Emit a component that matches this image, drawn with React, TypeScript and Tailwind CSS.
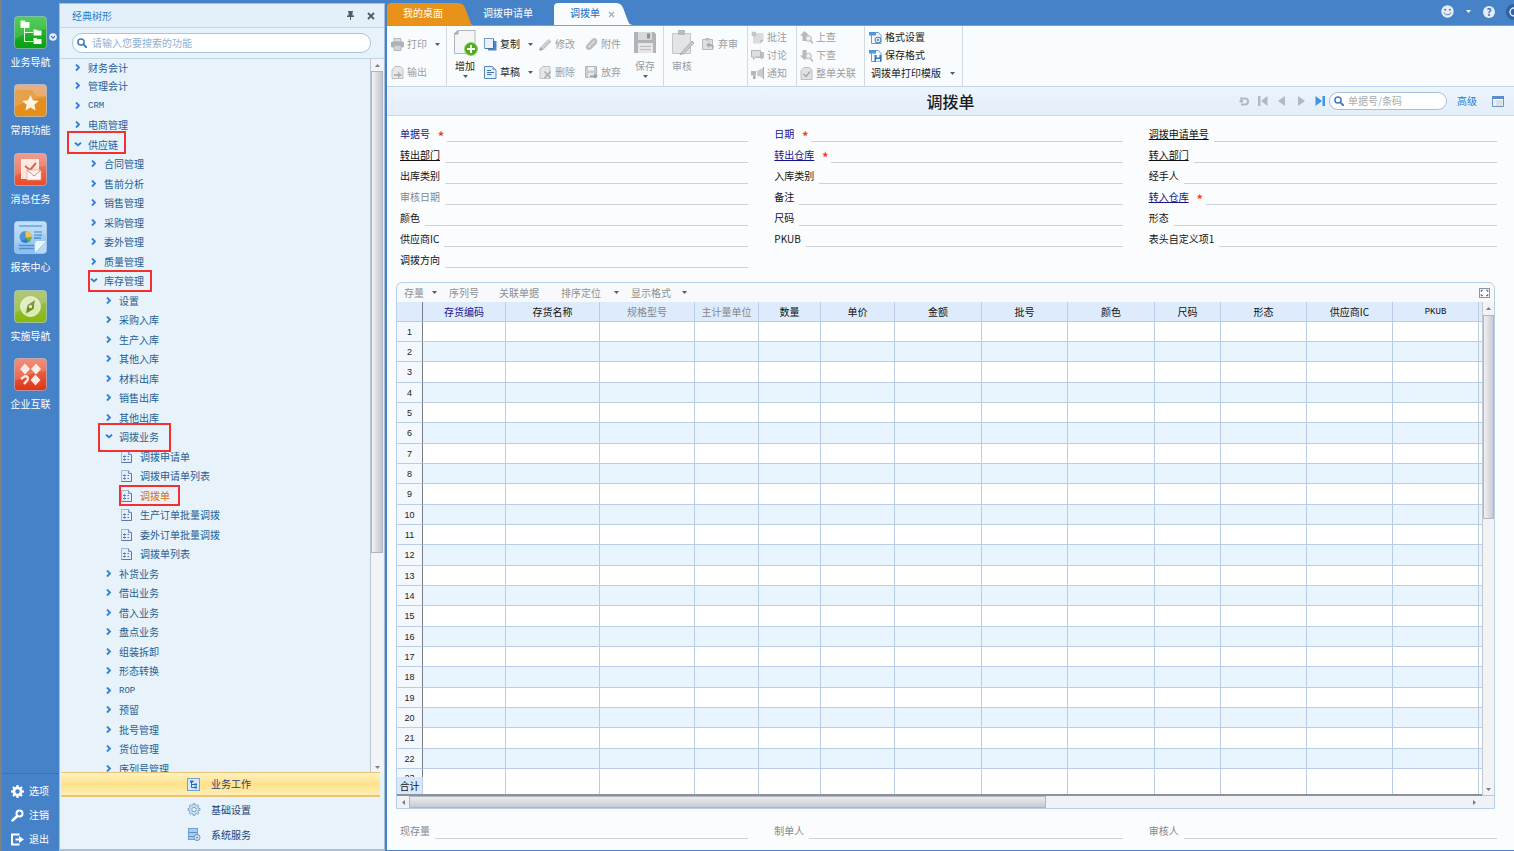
import type { ReactNode } from "react";
import clsx from "clsx";

/* ---------- small shared bits ---------- */

function Caret({ className = "text-[#555d66]" }: { className?: string }) {
  return (
    <svg width="5" height="3" viewBox="0 0 5 3" className={clsx("shrink-0", className)}>
      <path d="M0 0h5L2.5 3z" fill="currentColor" />
    </svg>
  );
}

function SearchIcon() {
  return (
    <svg width="10" height="10" viewBox="0 0 10 10" className="shrink-0">
      <circle cx="4" cy="4" r="3.1" fill="none" stroke="#3f7cc6" strokeWidth="1.5" />
      <path d="M6.4 6.4 9.2 9.2" stroke="#3f7cc6" strokeWidth="2" strokeLinecap="round" />
    </svg>
  );
}

/* ---------- left navigation ---------- */

function Tile({ id, top, bottom, children }: { id: string; top: string; bottom: string; children: ReactNode }) {
  return (
    <svg width="33" height="33" viewBox="0 0 33 33">
      <defs>
        <linearGradient id={id} x1="0" y1="0" x2="0" y2="1">
          <stop offset="0" stopColor={top} />
          <stop offset="1" stopColor={bottom} />
        </linearGradient>
      </defs>
      <rect x="0.5" y="0.5" width="32" height="32" rx="3" fill={`url(#${id})`} stroke="#ffffff" strokeOpacity="0.35" />
      {children}
      <path d="M1 4a3 3 0 0 1 3-3h25a3 3 0 0 1 3 3v9C22 14 12 17 1 23z" fill="#fff" fillOpacity="0.16" />
    </svg>
  );
}

const navItems = [
  {
    label: "业务导航",
    icon: (
      <Tile id="nav-green" top="#35c43a" bottom="#0a9e12">
        <path d="M10.500 12v13.500H19M10.500 16.500H19" fill="none" stroke="#e4fae2" strokeWidth="1" />
        <path d="M6.500 4.500h4l1 1.500h4v6h-9zM19.500 13.500h3l1 1h4v5h-8zM19.500 22h3l1 1h4v5h-8z" fill="#f5fff3" />
      </Tile>
    ),
  },
  {
    label: "常用功能",
    icon: (
      <Tile id="nav-orange" top="#e2a070" bottom="#f59a06">
        <path d="M1 8c0-1 1-2 2-2h15l4 6h10v17a3 3 0 0 1-3 3H4a3 3 0 0 1-3-3z" fill="#e08a1c" fillOpacity="0.75" />
        <path d="m16.500 11 2.400 5.300 5.800.6-4.300 3.900 1.200 5.700-5.100-2.900-5.100 2.900 1.200-5.700-4.300-3.900 5.800-.6z" fill="#fdf3e4" />
      </Tile>
    ),
  },
  {
    label: "消息任务",
    icon: (
      <Tile id="nav-red" top="#ee8a7c" bottom="#ea4a26">
        <path d="M7 6h18v20H7z" fill="#fbe5df" />
        <path d="m11 13 5 4 6-7" fill="none" stroke="#dd4430" strokeWidth="2" />
        <path d="M13 17h14v10H13z" fill="#fff6f2" stroke="#e2a496" strokeWidth="0.700" />
        <path d="m13 17 7 6 7-6" fill="none" stroke="#c98b7e" strokeWidth="1" />
      </Tile>
    ),
  },
  {
    label: "报表中心",
    icon: (
      <Tile id="nav-blue" top="#b5dcf8" bottom="#8cbdf0">
        <path d="M5 5h23M20 11h8M20 14h8M20 17h7M5 24.500h15M5 27.500h15" stroke="#4e8fd2" strokeWidth="1.500" />
        <circle cx="11.500" cy="16" r="6" fill="#2d7fce" />
        <path d="M11.500 16v-6a6 6 0 0 1 6 6z" fill="#f5b431" />
        <path d="M11.500 16h6a6 6 0 0 1-3 5.200z" fill="#63b54a" />
        <path d="M32 20 21 32v-9.500c0-1.500 1-2.500 2.500-2.500z" fill="#e8f5ff" />
        <path d="M32 21v8a3 3 0 0 1-3 3h-7z" fill="#b7dafa" />
      </Tile>
    ),
  },
  {
    label: "实施导航",
    icon: (
      <Tile id="nav-lime" top="#a3bd5e" bottom="#86b90c">
        <circle cx="16.500" cy="16.500" r="10" fill="#dcebb4" />
        <circle cx="16.500" cy="16.500" r="10" fill="none" stroke="#fff" strokeOpacity="0.6" />
        <path d="m21 10-1.500 9-7.500 4.500L13.500 15z" fill="#6b8a28" />
        <circle cx="16.500" cy="16.700" r="1.600" fill="#e6f1c9" />
      </Tile>
    ),
  },
  {
    label: "企业互联",
    icon: (
      <Tile id="nav-link" top="#f07a5e" bottom="#de3517">
        <path d="m11 5.500 5 5.500-5 5.500L6 11zM22 5.500l5 5.500-5 5.500-5-5.500zM21.500 16.500l5 5.500-5 5.500-5-5.500z" fill="#fde7e0" />
        <path d="m7 21 3.500-2.500c2.500-1 4.500 1.500 3 3.500L10 26" fill="none" stroke="#fde7e0" strokeWidth="2.500" />
      </Tile>
    ),
  },
];

const gearPath =
  "M5.600 0h1.800l.4 1.700 1.100.5L10.400 1.300l1.300 1.300-.9 1.500.5 1.100 1.700.4v1.800l-1.700.4-.5 1.100.9 1.500-1.300 1.300-1.500-.9-1.100.5-.4 1.700H5.600l-.4-1.700-1.100-.5-1.500.9-1.300-1.300.9-1.500-.5-1.100L0 7.400V5.600l1.700-.4.500-1.100-.9-1.500 1.300-1.300 1.500.9 1.100-.5z";

const systemItems = [
  {
    label: "选项",
    icon: <path d={gearPath + "M6.500 4.300a2.200 2.200 0 1 0 0 4.400 2.200 2.200 0 0 0 0-4.400z"} fillRule="evenodd" fill="currentColor" />,
  },
  {
    label: "注销",
    icon: (
      <>
        <circle cx="8.500" cy="4.500" r="3" fill="none" stroke="currentColor" strokeWidth="2" />
        <path d="M6.200 7 1.500 11.500" stroke="currentColor" strokeWidth="2.500" strokeLinecap="round" />
      </>
    ),
  },
  {
    label: "退出",
    icon: (
      <>
        <path d="M7.500 2.500V1.500H1v10h6.500v-1" fill="none" stroke="currentColor" strokeWidth="2" />
        <path d="M4.500 5.500H8V3l5 3.500L8 10V7.500H4.500z" fill="currentColor" />
      </>
    ),
  },
];

function NavRail() {
  return (
    <nav className="relative flex w-[57px] shrink-0 flex-col justify-between pt-4 text-white">
      <ul>
        {navItems.map((item) => (
          <li key={item.label} className="odd:h-[68px] even:h-[69px]">
            <button className="flex w-full flex-col items-center gap-[5px]">
              {item.icon}
              <span className="leading-4">{item.label}</span>
            </button>
          </li>
        ))}
      </ul>
      <svg className="absolute right-0.5 top-[33px]" width="8" height="8" viewBox="0 0 8 8">
        <circle cx="4" cy="4" r="3.800" fill="#e6eff9" />
        <path d="M2 3.200 4 5.200l2-2" fill="none" stroke="#3f74b5" strokeWidth="1.200" />
      </svg>
      <ul className="border-t border-[#3b74b6] pt-[5px]">
        {systemItems.map((item) => (
          <li key={item.label}>
            <button className="flex h-6 items-center gap-[5px] pl-[9px]">
              <svg width="13" height="13" viewBox="0 0 13 13">
                {item.icon}
              </svg>
              {item.label}
            </button>
          </li>
        ))}
      </ul>
    </nav>
  );
}

/* ---------- tree panel ---------- */

type Node = { label: string; level: 0 | 1 | 2 | 3; open?: boolean; mark?: string };

const tree: Node[] = [
  { label: "财务会计", level: 0 },
  { label: "管理会计", level: 0 },
  { label: "CRM", level: 0 },
  { label: "电商管理", level: 0 },
  { label: "供应链", level: 0, open: true, mark: "-left-[7px] -right-2 -top-1 -bottom-0" },
  { label: "合同管理", level: 1 },
  { label: "售前分析", level: 1 },
  { label: "销售管理", level: 1 },
  { label: "采购管理", level: 1 },
  { label: "委外管理", level: 1 },
  { label: "质量管理", level: 1 },
  { label: "库存管理", level: 1, open: true, mark: "-left-0.5 -right-2 -top-px -bottom-px" },
  { label: "设置", level: 2 },
  { label: "采购入库", level: 2 },
  { label: "生产入库", level: 2 },
  { label: "其他入库", level: 2 },
  { label: "材料出库", level: 2 },
  { label: "销售出库", level: 2 },
  { label: "其他出库", level: 2 },
  { label: "调拨业务", level: 2, open: true, mark: "-left-[7px] -right-3 -top-1 -bottom-[5px]" },
  { label: "调拨申请单", level: 3 },
  { label: "调拨申请单列表", level: 3 },
  { label: "调拨单", level: 3, open: true, mark: "-left-0.5 -right-2.5 -top-px -bottom-px" },
  { label: "生产订单批量调拨", level: 3 },
  { label: "委外订单批量调拨", level: 3 },
  { label: "调拨单列表", level: 3 },
  { label: "补货业务", level: 2 },
  { label: "借出业务", level: 2 },
  { label: "借入业务", level: 2 },
  { label: "盘点业务", level: 2 },
  { label: "组装拆卸", level: 2 },
  { label: "形态转换", level: 2 },
  { label: "ROP", level: 2 },
  { label: "预留", level: 2 },
  { label: "批号管理", level: 2 },
  { label: "货位管理", level: 2 },
  { label: "序列号管理", level: 2 },
];

const indent = ["pl-[14px]", "pl-[30px]", "pl-[45px]", "pl-[61px]"];

function Chevron({ open }: { open?: boolean }) {
  return (
    <svg width="8" height="8" viewBox="0 0 8 8" className="shrink-0">
      <path d={open ? "M1 1.700 4 4.300l3-2.600" : "M2 0.500 5 3.500 2 6.500"} fill="none" stroke="#2f7fd6" strokeWidth="1.800" />
    </svg>
  );
}

function DocIcon() {
  return (
    <svg width="11" height="12" viewBox="0 0 11 12" className="shrink-0">
      <path d="M.5.5h7l3 3v8H.5z" fill="#e3eefb" stroke="#a3b5d6" />
      <path d="M10.500 3.500v8H.5" fill="none" stroke="#6276ac" />
      <path d="M7.500.5v3h3" fill="#c9d6ee" stroke="#7d90c0" />
      <path d="M2 5.500h3M3.500 4.500v2M2 8.500h3M3.500 7.500v2M6.500 5.500H8M6.500 8.500H8" stroke="#5a76ad" />
    </svg>
  );
}

function TreePanel() {
  return (
    <aside className="mt-[3px] flex w-[326px] shrink-0 flex-col border border-b-2 border-[#a9bfd6] bg-[#e7f2fb] text-[#1f5f93]">
      <header className="flex h-6 shrink-0 items-center border-b border-[#c3d5e4] bg-[#e3f0fa] pl-3 pr-[9px]">
        <h2 className="flex-1 text-[#2b7cc8]">经典树形</h2>
        <button aria-label="固定" className="mr-3">
          <svg width="9" height="9" viewBox="0 0 9 9">
            <path d="M2 0h5v1H6.500v3.500H8V6H1V4.500h1.500V1H2zM4 6h1v3H4z" fill="#4f5b67" />
          </svg>
        </button>
        <button aria-label="关闭">
          <svg width="8" height="8" viewBox="0 0 8 8">
            <path d="m1 1 6 6M7 1 1 7" stroke="#4f5b67" strokeWidth="1.800" />
          </svg>
        </button>
      </header>
      <div className="shrink-0 border-b border-[#c3d5e4] pb-[5px] pl-3 pr-[13px] pt-[5px]">
        <div className="flex h-5 items-center gap-[5px] rounded-full border border-[#a9c4e0] bg-white pl-1">
          <SearchIcon />
          <input
            aria-label="搜索功能"
            placeholder="请输入您要搜索的功能"
            className="min-w-0 flex-1 bg-transparent outline-none placeholder:text-[#8fb0d0]"
          />
        </div>
      </div>
      <div className="flex min-h-0 flex-1">
        <ul className="min-w-0 flex-1 overflow-hidden">
          {tree.map((node, i) => (
            <li
              key={node.label}
              className={clsx("flex", i === 0 ? "h-[17px]" : "odd:h-[19px] even:h-5", indent[node.level])}
            >
              <button
                className={clsx(
                  "relative flex items-center whitespace-nowrap",
                  node.level === 3 ? "gap-2" : "gap-1.5",
                  node.level === 3 && node.open && "text-[#cf7410]"
                )}
              >
                {node.level === 3 ? <DocIcon /> : <Chevron open={node.open} />}
                <span className={clsx(/^[A-Z]+$/.test(node.label) && "font-['Liberation_Mono',monospace] text-[9px]")}>
                  {node.label}
                </span>
                {node.mark && <span className={clsx("absolute z-10 border-2 border-[#f23030]", node.mark)} />}
              </button>
            </li>
          ))}
        </ul>
        <div className="mr-px flex w-[13px] shrink-0 flex-col items-center border-l border-[#bcc6d0] bg-[#f2f4f7]">
          <div className="flex h-3 w-full items-center justify-center">
            <Caret className="rotate-180 text-[#77808a]" />
          </div>
          <div className="h-[482px] w-full border border-[#b0b4bd] bg-linear-to-r from-[#f3f3f6] to-[#c3c4cf]" />
          <div className="flex-1" />
          <div className="flex h-2.5 items-center">
            <Caret className="text-[#77808a]" />
          </div>
        </div>
      </div>
      <div className="shrink-0 pb-0.5 pl-px pr-1 text-[#1f3f73]">
        <button className="flex h-[25px] w-full items-center gap-2.5 border-b-2 border-t border-[#ecc274] bg-linear-to-b from-[#fff3c0] via-[#ffe18a] to-[#fff0b4] pl-[126px]">
          <svg width="14" height="13" viewBox="0 0 14 13">
            <rect x="0.500" y="0.500" width="12" height="12" fill="#d7eafc" stroke="#6fa0d6" />
            <path d="M4.500 4v5.500H8M4.500 6.500H8" fill="none" stroke="#2c6cb4" />
            <path d="M3 2.500h3.500v2H3zM7.500 5.500H10v2H7.500zM7.500 8.500H10v2H7.500z" fill="#2c6cb4" />
          </svg>
          业务工作
        </button>
        <button className="flex h-[25px] w-full items-center gap-2.5 pl-[126px]">
          <svg width="14" height="13" viewBox="-0.500 -0.500 14 14">
            <path d={gearPath} fill="#c7def3" stroke="#6d9cc9" strokeWidth="0.900" />
            <circle cx="6.500" cy="6.500" r="2.300" fill="#eef6fd" stroke="#6d9cc9" />
          </svg>
          基础设置
        </button>
        <button className="flex h-[25px] w-full items-center gap-2.5 pl-[126px]">
          <svg width="14" height="13" viewBox="0 0 14 13">
            <rect x="1.500" y="0.500" width="9" height="11" fill="#a9cdf0" stroke="#6f9fce" />
            <path d="M2 4.500h8M2 8.500h8" stroke="#5e92c6" />
            <circle cx="10" cy="9.500" r="3" fill="#d9e9f8" stroke="#6a8fb8" />
            <circle cx="10" cy="9.500" r="1" fill="#5f87b4" />
          </svg>
          系统服务
        </button>
      </div>
    </aside>
  );
}

/* ---------- tabs and ribbon ---------- */

function TabBar() {
  return (
    <div className="flex h-[26px] items-end border-b border-[#6ca4e0] pt-[3px]">
      <button className="flex h-full">
        <span className="flex h-full w-[70px] items-center rounded-tl bg-[#e8921a] pb-0.5 pl-4 text-white">我的桌面</span>
        <svg width="16" height="22" viewBox="0 0 16 22">
          <path d="M0 0c5 0 7 2 8.500 6L13 18c1 3 2 4 3 4H0z" fill="#e8921a" />
        </svg>
      </button>
      <button className="flex h-full items-center pb-0.5 pl-2.5 text-white">调拨申请单</button>
      <div className="ml-[21px] flex h-full">
        <button className="flex h-full items-center rounded-tl bg-[#f9fcff] pb-0.5 pl-4 text-[#1d68b8]">调拨单</button>
        <button aria-label="关闭标签" className="flex h-full w-[15px] items-center justify-end bg-[#f9fcff]">
          <svg width="7" height="7" viewBox="0 0 7 7">
            <path d="m1 1 5 5M6 1 1 6" stroke="#a4abb3" strokeWidth="1.200" />
          </svg>
        </button>
        <svg width="18" height="22" viewBox="0 0 18 22">
          <path d="M0 0c5 0 7 2 8.500 6L13 18c1 3 3 4 5 4H0z" fill="#f9fcff" />
        </svg>
      </div>
      <div className="flex h-full flex-1 items-center justify-end overflow-hidden pb-[5px]">
        <button aria-label="表情" className="mr-3">
          <svg width="13" height="13" viewBox="0 0 13 13">
            <circle cx="6.500" cy="6.500" r="6.200" fill="#e4edf7" />
            <circle cx="4.200" cy="4.800" r="1" fill="#4a74a8" />
            <circle cx="8.800" cy="4.800" r="1" fill="#4a74a8" />
            <path d="M3 7.500c1 3 6 3 7 0" fill="none" stroke="#4a74a8" />
          </svg>
        </button>
        <Caret className="mr-3 text-white" />
        <button aria-label="帮助" className="mr-2.5 flex size-3 items-center justify-center rounded-full bg-[#e4edf7] font-bold leading-3 text-[#3f72b0]">
          ?
        </button>
        <svg width="9" height="16" viewBox="0 0 9 16">
          <circle cx="9" cy="8" r="8" fill="#2f63a3" />
          <circle cx="9" cy="8" r="4" fill="none" stroke="#e4edf7" strokeWidth="1.500" />
        </svg>
      </div>
    </div>
  );
}

const icons: Record<string, ReactNode> = {
  print: (
    <>
      <path d="M3 0.500h7V4H3z" fill="#dcdfe2" stroke="#b4b8bc" />
      <rect x="0" y="3.500" width="13" height="6" rx="1.500" fill="#aeb1b5" />
      <path d="M3 7.500h7v5H3z" fill="#d2d5d8" stroke="#b4b8bc" />
    </>
  ),
  output: (
    <>
      <path d="M4 .5h5.500L12 3v9.500H1V4z" fill="#e6e8ea" stroke="#bcbfc2" />
      <path d="M3 8h4V5.500l4 3.500-4 3.500V10H3z" fill="#b2b5b8" />
    </>
  ),
  copy: (
    <>
      <path d="M4 3h8.500v9.500H4z" fill="#4a86c8" />
      <path d="M.5.5h9v10h-9z" fill="#e9f2fb" stroke="#7a9cc2" />
      <path d="M9.500 1v9.500H1" fill="none" stroke="#466f9f" />
    </>
  ),
  draft: (
    <>
      <path d="M.5.5h8L12 4v8.500H.5z" fill="#e5f0fb" stroke="#5a87ba" />
      <path d="M3 4.500h4M3 6.500h7M3 8.500h4.500" stroke="#3b74b4" />
      <path d="M8.500.5V4H12z" fill="#7ea9d8" />
    </>
  ),
  edit: (
    <>
      <path d="M1 9.500 9.500 1l3 2.500L4 12 .5 12.500z" fill="#c0c3c6" />
      <path d="M2.500 10 10.500 2.200" stroke="#e4e6e8" />
      <path d="M.5 12.500 1 9.500 4 12z" fill="#97999c" />
    </>
  ),
  attach: (
    <path d="M11 4.500 5.500 10c-2 1.800-4.500-.5-2.800-2.500L8 2c1.500-1.500 4 .3 2.500 2.300L5.800 9" fill="none" stroke="#bcbfc2" strokeWidth="2.600" />
  ),
  remove: (
    <>
      <path d="M3.500.5H11v12H1V3z" fill="#e4e6e8" stroke="#c0c3c6" />
      <path d="m5.500 5.500 6 6.500M11.500 5.500l-6 6.500" stroke="#abaeb1" strokeWidth="1.600" />
    </>
  ),
  discard: (
    <>
      <path d="M.5.5h11v11h-11z" fill="#c9cbce" stroke="#b2b5b8" />
      <path d="M3 1h6v3.500H3z" fill="#f2f3f4" />
      <path d="M3 7h6v4.500H3z" fill="#e6e7e9" />
      <path d="M5 9.500h4V7.500l4 2.500-4 2.500v-1.500H5z" fill="#9c9fa2" />
    </>
  ),
  unaudit: (
    <>
      <path d="M.5 1.500h10v10H.5z" fill="#dddfe1" stroke="#b8bbbe" />
      <path d="M3.500 0h4v2.500h-4z" fill="#b8bbbe" />
      <path d="M11.500 12c0-3-1.500-4-4-4v2L4 7l3.500-3v2c4 0 5 2.500 4 6z" fill="#a8abae" />
    </>
  ),
  note: (
    <>
      <path d="M2 2h10.500v7l-3 3.500H2z" fill="#d9dbdd" />
      <path d="M12.500 9h-3v3.500z" fill="#b5b8bb" />
      <circle cx="3" cy="3" r="2.500" fill="#c4c6c9" />
    </>
  ),
  discuss: (
    <>
      <path d="M4 3h9v6h-1.500v2L9 9H4z" fill="#bcbfc2" />
      <path d="M.5 1.500h9v6.500H5l-2.500 2.500V8h-2z" fill="#dcdee0" stroke="#b3b6b9" />
    </>
  ),
  notify: (
    <>
      <path d="M0 4h5v4.500H0z" fill="#b4b7ba" />
      <path d="m6 4 6-3v10L6 8.500z" fill="#c8cbce" />
      <path d="M2 8.500h2.500V12H2zM12 0h1v12h-1z" fill="#a9acaf" />
    </>
  ),
  up: (
    <>
      <path d="M4.500 0 9 4.500H6.500V10h-4V4.500H0z" fill="#b7babd" />
      <circle cx="8.500" cy="7.500" r="2.800" fill="#eceef0" stroke="#b2b5b8" />
      <path d="m10.500 9.500 2.500 3" stroke="#b2b5b8" strokeWidth="1.500" />
    </>
  ),
  down: (
    <>
      <path d="M4.500 11 0 6.500h2.500V1h4v5.500H9z" fill="#b7babd" />
      <circle cx="8.500" cy="7" r="2.800" fill="#eceef0" stroke="#b2b5b8" />
      <path d="m10.500 9.500 2.500 3" stroke="#b2b5b8" strokeWidth="1.500" />
    </>
  ),
  link: (
    <>
      <path d="M4 .5h5.500L12 3v9.500H1V3.500z" fill="#dfe1e3" stroke="#bcbfc2" />
      <path d="m3.500 7 2.500 2.500L10 4.500" fill="none" stroke="#abaeb1" strokeWidth="1.700" />
    </>
  ),
  formatSet: (
    <>
      <path d="M2.500 1.500h7l2.500 3v8H2.500z" fill="#f2f8fe" stroke="#6f9ac8" />
      <path d="M0 1h7v3.500H0z" fill="#4f97dd" />
      <circle cx="9" cy="9" r="3" fill="#d7e8f8" stroke="#4e7db0" />
      <circle cx="9" cy="9" r="1" fill="#4e7db0" />
    </>
  ),
  formatSave: (
    <>
      <path d="M2.500 1.500h7l2.500 3v8H2.500z" fill="#f2f8fe" stroke="#6f9ac8" />
      <path d="M0 1h7v3.500H0z" fill="#4f97dd" />
      <path d="M5.500 6h7v6.500h-7z" fill="#3a74b4" />
      <path d="M7.500 6h3v2.500h-3zM7 10h4v2.500H7z" fill="#e7f1fb" />
    </>
  ),
};

type ToolProps = { icon?: string; label: string; caret?: string; dark?: boolean; className: string };

function Tool({ icon, label, caret, dark, className }: ToolProps) {
  return (
    <button className={clsx("flex items-center gap-[3px] whitespace-nowrap", dark ? "text-[#222]" : "text-[#9a9da1]", className)}>
      {icon && (
        <svg width="13" height="13" viewBox="0 0 13 13" className="shrink-0">
          {icons[icon]}
        </svg>
      )}
      {label}
      {caret && <Caret className={clsx("text-[#555d66]", caret)} />}
    </button>
  );
}

function BigTool({ label, caret, dark, children }: { label: string; caret?: boolean; dark?: boolean; children: ReactNode }) {
  return (
    <button className={clsx("flex w-8 flex-col items-center pt-[3px]", dark ? "text-[#222]" : "text-[#9a9da1]")}>
      <svg width="26" height="28" viewBox="0 0 26 28">
        {children}
      </svg>
      <span className="mt-px leading-4">{label}</span>
      {caret && <Caret className="mt-px text-[#555d66]" />}
    </button>
  );
}

const groupClass = "flex shrink-0 border-r border-[#d3dae1]";

function Ribbon() {
  return (
    <div className="flex h-[61px] shrink-0 overflow-hidden border-b border-[#c3d5ea] bg-[#f9fcff]">
      <div className={clsx(groupClass, "w-[60px] flex-col pl-1 pt-1")}>
        <Tool icon="print" label="打印" caret="ml-[5px]" className="h-7" />
        <Tool icon="output" label="输出" className="h-7" />
      </div>
      <div className={clsx(groupClass, "pl-0.5")}>
        <BigTool label="增加" caret dark>
          <path d="M6 1.500h17v23H2.500V5z" fill="#f3f5f6" stroke="#b0b6bb" />
          <path d="M2.500 5H6V1.500z" fill="#b9bec2" stroke="#9da3a8" />
          <circle cx="19" cy="20" r="6.500" fill="#4cae1c" stroke="#9ad06e" />
          <path d="M19 16v8M15 20h8" stroke="#fff" strokeWidth="2" />
        </BigTool>
        <div className="grid grid-cols-[55px_46px_44px] pl-[3px] pt-1">
          <Tool icon="copy" label="复制" caret="ml-[5px]" dark className="h-7" />
          <Tool icon="edit" label="修改" className="h-7" />
          <Tool icon="attach" label="附件" className="h-7" />
          <Tool icon="draft" label="草稿" caret="ml-[5px]" dark className="h-7" />
          <Tool icon="remove" label="删除" className="h-7" />
          <Tool icon="discard" label="放弃" className="h-7" />
        </div>
        <div className="pr-0.5">
          <BigTool label="保存" caret>
            <path d="M2 3h20l2 2v19H2z" fill="#b0b4b8" />
            <path d="M6 3h14v8H6z" fill="#d6d8da" />
            <path d="M15 4.500h3v5h-3z" fill="#8d9195" />
            <path d="M6 14h15v10H6z" fill="#e3e5e6" />
            <path d="M8 17.500h11M8 20.500h11" stroke="#b9bcbf" />
          </BigTool>
        </div>
      </div>
      <div className={clsx(groupClass, "pl-0.5 pr-[9px]")}>
        <BigTool label="审核">
          <path d="M3.500 4.500h18v20h-18z" fill="#e2e4e6" stroke="#c4c7ca" />
          <path d="M9 1h7v5H9z" fill="#b8bbbe" />
          <path d="M23 12 13 23l-2 2.500 4-1L25 14z" fill="#c9cbce" stroke="#a8abae" />
        </BigTool>
        <div className="pl-1 pt-1">
          <Tool icon="unaudit" label="弃审" className="h-7" />
        </div>
      </div>
      <div className={clsx(groupClass, "flex-col pl-[3px] pr-[9px] pt-0.5")}>
        <Tool icon="note" label="批注" className="h-[18px]" />
        <Tool icon="discuss" label="讨论" className="h-[18px]" />
        <Tool icon="notify" label="通知" className="h-[18px]" />
      </div>
      <div className={clsx(groupClass, "flex-col pl-[3px] pr-2 pt-0.5")}>
        <Tool icon="up" label="上查" className="h-[18px]" />
        <Tool icon="down" label="下查" className="h-[18px]" />
        <Tool icon="link" label="整单关联" className="h-[18px]" />
      </div>
      <div className={clsx(groupClass, "flex-col pl-1 pr-[7px] pt-0.5")}>
        <Tool icon="formatSet" label="格式设置" dark className="h-[18px]" />
        <Tool icon="formatSave" label="保存格式" dark className="h-[18px]" />
        <Tool label="调拨单打印模版" caret="ml-1.5" dark className="h-[18px] pl-0.5" />
      </div>
    </div>
  );
}

function TitleBar() {
  return (
    <div className="grid h-[29px] shrink-0 grid-cols-[1fr_auto_1fr] items-center border-b border-[#c9d9ea] bg-linear-to-b from-[#edf4fc] to-[#e3eef9]">
      <span />
      <h1 className="text-[16px] font-medium text-[#1b1b1b]">调拨单</h1>
      <div className="flex items-center justify-end pr-2.5">
        <div className="flex items-center gap-[9px] pr-1 text-[#b4b9bf]">
          <button aria-label="刷新">
            <svg width="10" height="11" viewBox="0 0 10 11">
              <path d="M1 2.500h5a3 3 0 0 1 0 6H2" fill="none" stroke="currentColor" strokeWidth="2" />
              <path d="M.5 6.500v-2L3 3h1v3.500z" fill="currentColor" />
            </svg>
          </button>
          <button aria-label="首张">
            <svg width="10" height="10" viewBox="0 0 10 10">
              <path d="M0 0h2.500v10H0zM9.500 0v10L3 5z" fill="currentColor" />
            </svg>
          </button>
          <button aria-label="上张">
            <svg width="10" height="10" viewBox="0 0 10 10">
              <path d="M8 0v10L1 5z" fill="currentColor" />
            </svg>
          </button>
          <button aria-label="下张">
            <svg width="10" height="10" viewBox="0 0 10 10">
              <path d="M2 0v10l7-5z" fill="currentColor" />
            </svg>
          </button>
          <button aria-label="末张" className="text-[#3f96e6]">
            <svg width="10" height="10" viewBox="0 0 10 10">
              <path d="M7.500 0H10v10H7.500zM.5 0v10L7 5z" fill="currentColor" />
            </svg>
          </button>
        </div>
        <div className="flex h-[18px] w-[118px] items-center gap-1 rounded-full border border-[#a9c0da] bg-white pl-1">
          <SearchIcon />
          <input
            aria-label="单据号/条码"
            placeholder="单据号/条码"
            className="min-w-0 flex-1 bg-transparent outline-none placeholder:text-[#a7abb0]"
          />
        </div>
        <a href="#advanced" className="ml-2.5 text-[#1f7ad6]">
          高级
        </a>
        <button aria-label="列表" className="ml-[15px]">
          <svg width="12" height="11" viewBox="0 0 12 11">
            <path d="M.5.5h11v10H.5z" fill="#fff" stroke="#6a93c4" />
            <path d="M0 0h12v3H0z" fill="#5b8dc9" />
            <path d="M3.500 5h7M3.500 7h7M3.500 9h7M1.500 5h1M1.500 7h1M1.500 9h1" stroke="#b9bfca" />
          </svg>
        </button>
      </div>
    </div>
  );
}

/* ---------- voucher form ---------- */

type FieldDef = { label: string; required?: boolean; link?: boolean; color?: string };

const NAVY = "text-[#14148c]";
const GRAY = "text-[#85888c]";

const fields: FieldDef[] = [
  { label: "单据号", required: true, color: NAVY },
  { label: "日期", required: true, color: NAVY },
  { label: "调拨申请单号", link: true },
  { label: "转出部门", link: true },
  { label: "转出仓库", required: true, link: true, color: NAVY },
  { label: "转入部门", link: true },
  { label: "出库类别" },
  { label: "入库类别" },
  { label: "经手人" },
  { label: "审核日期", color: GRAY },
  { label: "备注" },
  { label: "转入仓库", required: true, link: true, color: NAVY },
  { label: "颜色" },
  { label: "尺码" },
  { label: "形态" },
  { label: "供应商IC" },
  { label: "PKUB" },
  { label: "表头自定义项1" },
  { label: "调拨方向" },
];

function Field({ label, required, link, color = "text-[#111]" }: FieldDef) {
  return (
    <div className="flex h-[21px]">
      <label htmlFor={label} className={clsx("shrink-0 pt-[5px] leading-4", color)}>
        {link ? (
          <a href="#ref" className="underline underline-offset-1">
            {label}
          </a>
        ) : (
          label
        )}
      </label>
      {required && <span className="ml-2 pt-[7px] text-[12px] font-bold leading-4 text-[#f03a1c]">*</span>}
      <input
        id={label}
        className={clsx("min-w-0 flex-1 border-b border-[#cdd2d8] bg-transparent outline-none", required ? "ml-[3px]" : "ml-[5px]")}
      />
    </div>
  );
}

/* ---------- detail grid ---------- */

const columns = [
  { label: "存货编码", width: "w-[83px]", color: NAVY },
  { label: "存货名称", width: "w-[94px]" },
  { label: "规格型号", width: "w-[95px]", color: GRAY },
  { label: "主计量单位", width: "w-[64px]", color: GRAY },
  { label: "数量", width: "w-[62px]" },
  { label: "单价", width: "w-[74px]" },
  { label: "金额", width: "w-[87px]" },
  { label: "批号", width: "w-[86px]" },
  { label: "颜色", width: "w-[87px]" },
  { label: "尺码", width: "w-[66px]" },
  { label: "形态", width: "w-[86px]" },
  { label: "供应商IC", width: "w-[86px]" },
  { label: "PKUB", width: "w-[86px]" },
];

const rows = Array.from({ length: 22 }, (_, i) => i + 1);

function DetailGrid() {
  return (
    <section className="ml-[9px] mr-[19px] mt-[14px] rounded-t-md border border-[#b7cfe8] bg-[#f7f9fb]">
      <div className="flex h-[19px] items-center pl-[7px] pr-1 text-[#8d9094]">
        <button className="flex items-center gap-2">
          存量 <Caret />
        </button>
        <button className="ml-3">序列号</button>
        <button className="ml-5">关联单据</button>
        <button className="ml-[22px] flex items-center gap-[13px]">
          排序定位 <Caret />
        </button>
        <button className="ml-3 flex items-center gap-[11px]">
          显示格式 <Caret />
        </button>
        <button aria-label="全屏" className="ml-auto">
          <svg width="11" height="10" viewBox="0 0 11 10">
            <rect x="0.500" y="0.500" width="10" height="9" fill="#fff" stroke="#8b959f" />
            <path d="M2 4V2h2zM7 2h2v2zM9 6v2H7zM4 8H2V6z" fill="#6d7781" stroke="#6d7781" strokeWidth="0.500" />
          </svg>
        </button>
      </div>
      <div className="flex">
        <div className="min-w-0 flex-1 overflow-hidden border-b-2 border-[#8b93a3]">
          <table className="w-full table-fixed border-separate border-spacing-0 bg-white">
            <thead>
              <tr className="h-5 bg-[#deebfd]">
                <th className="w-[26px] border-b border-r border-b-[#b9cde8] border-r-[#777e8a] p-0" />
                {columns.map((col) => (
                  <th
                    key={col.label}
                    className={clsx(
                      "border-b border-r border-[#b9cde8] p-0 font-normal leading-4",
                      col.width,
                      col.color ?? "text-[#111]",
                      col.label === "PKUB" && "font-['Liberation_Mono',monospace] text-[9px]"
                    )}
                  >
                    {col.label}
                  </th>
                ))}
                <th className="border-b border-[#b9cde8] p-0" />
              </tr>
            </thead>
            <tbody>
              {rows.map((n) => (
                <tr key={n} className="h-5 even:bg-[#e8f5fe] nth-[3n]:h-[21px]">
                  <th className="border-b border-r border-b-[#b9cde8] border-r-[#777e8a] bg-[#f3f8fe] p-0 font-['Liberation_Sans',sans-serif] text-[9px] font-normal leading-4 text-[#222]">
                    {n}
                  </th>
                  {columns.map((col) => (
                    <td key={col.label} className="border-b border-r border-[#b9cde8] p-0" />
                  ))}
                  <td className="border-b border-[#b9cde8] p-0" />
                </tr>
              ))}
              {/* last row is only partly visible above the totals */}
              <tr className="h-2">
                <th className="border-r border-[#777e8a] bg-[#f3f8fe] p-0 font-['Liberation_Sans',sans-serif] text-[9px] font-normal leading-[18px] text-[#222]">
                  <div className="h-2 overflow-hidden">23</div>
                </th>
                {columns.map((col) => (
                  <td key={col.label} className="border-r border-[#b9cde8] p-0" />
                ))}
                <td className="p-0" />
              </tr>
            </tbody>
            <tfoot>
              <tr className="h-[17px]">
                <th className="border-r border-[#b9cde8] bg-[#d9e8fb] p-0 font-normal leading-4 text-[#111]">合计</th>
                {columns.map((col) => (
                  <td key={col.label} className="border-r border-[#b9cde8] p-0" />
                ))}
                <td className="p-0" />
              </tr>
            </tfoot>
          </table>
        </div>
        <div className="flex w-3 flex-col items-center border-b border-l border-[#c3c8ce] bg-[#f1f3f5]">
          <div className="flex h-[13px] items-center">
            <Caret className="rotate-180 text-[#77808a]" />
          </div>
          <div className="h-[204px] w-full border border-[#b3b6be] bg-linear-to-r from-[#f1f1f4] to-[#c9cad2]" />
          <div className="flex-1" />
          <div className="flex h-3 items-center">
            <Caret className="text-[#77808a]" />
          </div>
        </div>
      </div>
      <div className="flex h-3 items-center bg-[#f0f2f5] pr-[17px]">
        <div className="flex w-3 justify-center">
          <Caret className="rotate-90 text-[#77808a]" />
        </div>
        <div className="h-full w-[59%] border border-[#b3b6be] bg-linear-to-b from-[#ececef] to-[#c9cad0]" />
        <div className="flex-1" />
        <Caret className="-rotate-90 text-[#77808a]" />
      </div>
    </section>
  );
}

export default function App() {
  return (
    <div
      lang="zh-CN"
      className="flex h-screen overflow-hidden border-l-2 border-[#808080] bg-[#4682c8] font-['Noto_Sans_CJK_SC',sans-serif] text-[10px] leading-4"
    >
      <NavRail />
      <TreePanel />
      <main className="ml-0.5 flex min-w-0 flex-1 flex-col">
        <TabBar />
        <Ribbon />
        <TitleBar />
        <div className="mb-px min-h-0 flex-1 overflow-hidden bg-[#fbfcfe]">
          <form className="grid grid-cols-3 gap-x-[26px] pl-[13px] pr-[17px] pt-[5px]">
            {fields.map((f) => (
              <Field key={f.label} {...f} />
            ))}
          </form>
          <DetailGrid />
          <div className="mt-[9px] grid grid-cols-3 gap-x-[26px] pl-[13px] pr-[17px]">
            <Field label="现存量" color={GRAY} />
            <Field label="制单人" color={GRAY} />
            <Field label="审核人" color={GRAY} />
          </div>
        </div>
      </main>
    </div>
  );
}
